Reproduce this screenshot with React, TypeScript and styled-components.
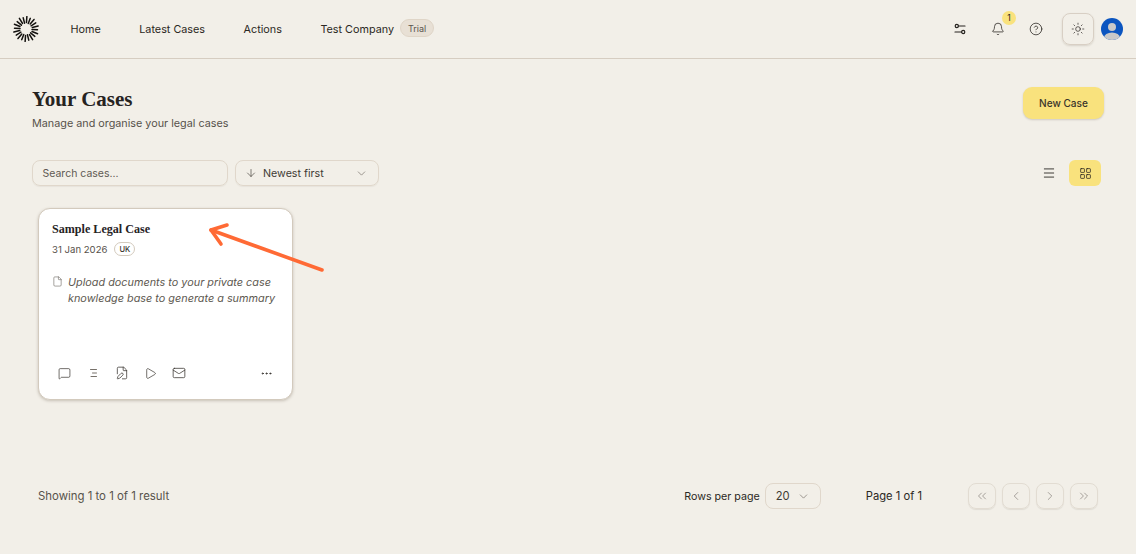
import React from "react";
import styled, { createGlobalStyle } from "styled-components";
import {
  ArrowDown, ChevronDown, ChevronLeft, ChevronRight, ChevronsLeft, ChevronsRight,
  Bell, CircleHelp, Sun, File, MessageSquare, Play, Mail, Ellipsis, Menu, LayoutGrid, FilePen,
} from "lucide-react";

const Global = createGlobalStyle`
  html, body { margin: 0; padding: 0; background: #f2efe8; }
  body { font-family: Inter, "Liberation Sans", sans-serif; color: #26231f; }
  * { box-sizing: border-box; }
`;

const Page = styled.div`
  position: relative;
  width: 1136px;
  height: 554px;
  overflow: hidden;
  background: #f2efe8;
`;

const Header = styled.header`
  height: 59px;
  display: flex;
  align-items: center;
  padding: 0 13px 0 13px;
  border-bottom: 1px solid #d6cdc1;
`;

const Logo = styled.svg`
  width: 26px;
  height: 26px;
  flex: none;
`;

const Nav = styled.nav`
  display: flex;
  align-items: center;
  gap: 38.5px;
  margin-left: 31.5px;
`;

const NavLink = styled.span`
  font-size: 10.8px;
  font-weight: 400;
  letter-spacing: 0;
  color: #2b2823;
  white-space: nowrap;
`;

const CompanyGroup = styled.div`
  display: flex;
  align-items: center;
  gap: 6px;
`;

const TrialBadge = styled.span`
  height: 18px;
  padding: 0 7px;
  margin-top: -2px;
  display: flex;
  align-items: center;
  border-radius: 9px;
  background: #e8e0d5;
  border: 1px solid #dfd5c7;
  font-size: 9px;
  color: #5a554e;
`;

const HeaderActions = styled.div`
  margin-left: auto;
  display: flex;
  align-items: center;
`;

const IconSlot = styled.span`
  position: relative;
  width: 38px;
  display: flex;
  justify-content: center;
  color: #26231f;
`;

const NotifyBadge = styled.span`
  position: absolute;
  top: -11px;
  left: 23px;
  width: 14px;
  height: 14px;
  border-radius: 50%;
  background: #f9e27d;
  font-size: 8.5px;
  display: flex;
  align-items: center;
  justify-content: center;
`;

const ThemeButton = styled.span`
  width: 32px;
  height: 32px;
  margin-left: 7px;
  border-radius: 8px;
  border: 1px solid #d8cfc4;
  box-shadow: 0 1px 2px rgba(70, 55, 35, 0.15);
  display: flex;
  align-items: center;
  justify-content: center;
  color: #26231f;
`;

const Avatar = styled.svg`
  width: 22px;
  height: 22px;
  margin-left: 7px;
  flex: none;
`;

const Main = styled.main`
  padding: 28px 32px 0;
`;

const TitleRow = styled.div`
  display: flex;
  justify-content: space-between;
  align-items: flex-start;
`;

const Title = styled.h1`
  margin: 0;
  font-family: "Liberation Serif", serif;
  font-size: 21px;
  line-height: 25px;
  font-weight: 700;
  color: #26231f;
`;

const Subtitle = styled.p`
  margin: 4px 0 0;
  font-size: 10.8px;
  line-height: 16px;
  color: #57524b;
`;

const NewCaseButton = styled.span`
  width: 81px;
  height: 32px;
  display: flex;
  align-items: center;
  justify-content: center;
  border-radius: 9px;
  background: #f9e27d;
  box-shadow: 0 1px 2px rgba(70, 55, 35, 0.2);
  font-size: 10.1px;
  font-weight: 500;
  color: #3a352b;
`;

const Toolbar = styled.div`
  margin-top: 28px;
  display: flex;
  align-items: center;
  gap: 7px;
`;

const SearchBox = styled.div`
  width: 196px;
  height: 26px;
  padding: 0 9.5px;
  display: flex;
  align-items: center;
  border: 1px solid #e0d7cb;
  border-radius: 8px;
  box-shadow: 0 1px 1px rgba(70, 55, 35, 0.06);
  font-size: 10.5px;
  color: #5f5a53;
`;

const SortBox = styled.div`
  width: 144px;
  height: 26px;
  padding: 0 10px 0 9px;
  display: flex;
  align-items: center;
  border: 1px solid #e0d7cb;
  border-radius: 8px;
  box-shadow: 0 1px 1px rgba(70, 55, 35, 0.06);
  font-size: 10.7px;
  color: #3f3b35;
  svg:first-child { margin-right: 6px; }
  svg:last-child { margin-left: auto; color: #77716a; }
`;

const ViewToggle = styled.div`
  margin-left: auto;
  margin-right: 3px;
  display: flex;
  align-items: center;
  gap: 4px;
`;

const ViewButton = styled.span<{ $active?: boolean }>`
  width: 32px;
  height: 26px;
  display: flex;
  align-items: center;
  justify-content: center;
  border-radius: 6px;
  background: ${(p) => (p.$active ? "#f9e27d" : "transparent")};
  color: #26231f;
`;

const Card = styled.article`
  width: 255px;
  height: 192px;
  margin: 22px 0 0 6px;
  padding: 13px 13px 0;
  display: flex;
  flex-direction: column;
  background: #fff;
  border: 1px solid #d3cabd;
  border-radius: 12px;
  box-shadow: 0 1px 3px rgba(70, 55, 35, 0.25);
`;

const CardTitle = styled.h2`
  margin: 0;
  font-family: "Liberation Serif", serif;
  font-size: 12.1px;
  line-height: 15px;
  font-weight: 700;
  color: #26231f;
`;

const MetaRow = styled.div`
  margin-top: 5px;
  display: flex;
  align-items: center;
  gap: 7px;
  font-size: 9.6px;
  color: #57524b;
`;

const RegionBadge = styled.span`
  height: 14px;
  padding: 0 4px;
  display: flex;
  align-items: center;
  border: 1px solid #d3cabd;
  border-radius: 7px;
  font-size: 7.6px;
  font-weight: 500;
  color: #37332e;
`;

const Summary = styled.div`
  margin-top: 18px;
  display: flex;
  gap: 5px;
  color: #5d5850;
  svg { flex: none; margin-top: 2px; color: #5d5850; }
`;

const SummaryText = styled.p`
  margin: 0;
  font-size: 10.85px;
  line-height: 16px;
  font-style: italic;
  white-space: nowrap;
`;

const CardActions = styled.div`
  margin-top: auto;
  margin-bottom: 19px;
  padding: 0 6px;
  display: flex;
  align-items: center;
  gap: 15px;
  color: #37332e;
`;

const MoreIcon = styled.span`
  margin-left: auto;
  margin-right: 0;
  display: flex;
`;

const Footer = styled.footer`
  position: relative;
  margin-top: 83px;
  padding: 0 6px;
  height: 26px;
  display: flex;
  align-items: center;
  justify-content: flex-end;
`;

const ResultCount = styled.span`
  margin-right: auto;
  font-size: 11.4px;
  color: #57524b;
`;

const FooterLabel = styled.span`
  font-size: 10.7px;
  color: #2b2823;
  white-space: nowrap;
`;

const RowsSelect = styled.div`
  width: 56px;
  height: 26px;
  margin-left: 5px;
  padding: 0 10px;
  display: flex;
  align-items: center;
  justify-content: space-between;
  border: 1px solid #e0d7cb;
  border-radius: 8px;
  font-size: 11.2px;
  color: #3f3b35;
  svg { color: #77716a; }
`;

const PageLabel = styled(FooterLabel)`
  margin-left: 45px;
  margin-right: 46px;
  font-size: 11.2px;
`;

const Pager = styled.div`
  display: flex;
  gap: 6px;
`;

const PagerButton = styled.span`
  width: 28px;
  height: 26px;
  display: flex;
  align-items: center;
  justify-content: center;
  border: 1px solid #e2dcd2;
  border-radius: 8px;
  box-shadow: 0 1px 1px rgba(70, 55, 35, 0.1);
  color: #85807a;
`;

const ArrowOverlay = styled.svg`
  position: absolute;
  left: 200px;
  top: 216px;
  width: 130px;
  height: 62px;
  pointer-events: none;
`;

const rays = Array.from({ length: 20 }, (_, i) => (i * 360) / 20 + 4);

function LogoMark() {
  return (
    <Logo viewBox="0 0 26 26">
      {rays.map((a, i) => (
        <line
          key={a}
          x1="13"
          y1={i % 2 ? 7 : 6.5}
          x2="13"
          y2={i % 2 ? 1.5 : 0.5}
          stroke="#14120f"
          strokeWidth="1.5"
          strokeLinecap="round"
          transform={`rotate(${a} 13 13)`}
        />
      ))}
    </Logo>
  );
}

function SlidersGlyph() {
  return (
    <svg width="14" height="14" viewBox="0 0 14 14" fill="none" stroke="currentColor" strokeWidth="1.2" strokeLinecap="round">
      <circle cx="3.8" cy="4" r="1.6" />
      <line x1="5.4" y1="4" x2="12" y2="4" />
      <circle cx="10.2" cy="10" r="1.6" />
      <line x1="2" y1="10" x2="8.6" y2="10" />
    </svg>
  );
}

function LinesGlyph() {
  return (
    <svg width="14" height="14" viewBox="0 0 14 14" fill="none" stroke="#77716a" strokeWidth="1" strokeLinecap="round">
      <line x1="4.5" y1="3.5" x2="10.5" y2="3.5" />
      <line x1="6.5" y1="7" x2="10.5" y2="7" />
      <line x1="5" y1="10.5" x2="10.5" y2="10.5" />
    </svg>
  );
}

export default function App() {
  return (
    <Page>
      <Global />
      <Header>
        <LogoMark />
        <Nav>
          <NavLink>Home</NavLink>
          <NavLink>Latest Cases</NavLink>
          <NavLink>Actions</NavLink>
          <CompanyGroup>
            <NavLink>Test Company</NavLink>
            <TrialBadge>Trial</TrialBadge>
          </CompanyGroup>
        </Nav>
        <HeaderActions>
          <IconSlot><SlidersGlyph /></IconSlot>
          <IconSlot>
            <Bell size={14} strokeWidth={1.3} />
            <NotifyBadge>1</NotifyBadge>
          </IconSlot>
          <IconSlot><CircleHelp size={14} strokeWidth={1.3} /></IconSlot>
          <ThemeButton><Sun size={14} strokeWidth={1.2} /></ThemeButton>
          <Avatar viewBox="0 0 22 22">
            <defs>
              <clipPath id="avatar-clip"><circle cx="11" cy="11" r="11" /></clipPath>
            </defs>
            <g clipPath="url(#avatar-clip)">
              <rect width="22" height="22" fill="#0b55c0" />
              <circle cx="11" cy="9" r="4" fill="#c9c9c9" />
              <ellipse cx="11" cy="20" rx="8" ry="5.5" fill="#c9c9c9" />
            </g>
          </Avatar>
        </HeaderActions>
      </Header>
      <Main>
        <TitleRow>
          <div>
            <Title>Your Cases</Title>
            <Subtitle>Manage and organise your legal cases</Subtitle>
          </div>
          <NewCaseButton>New Case</NewCaseButton>
        </TitleRow>
        <Toolbar>
          <SearchBox>Search cases...</SearchBox>
          <SortBox>
            <ArrowDown size={12} strokeWidth={1.3} />
            Newest first
            <ChevronDown size={13} strokeWidth={1.3} />
          </SortBox>
          <ViewToggle>
            <ViewButton><Menu size={14} strokeWidth={1.5} /></ViewButton>
            <ViewButton $active><LayoutGrid size={13} strokeWidth={1.4} /></ViewButton>
          </ViewToggle>
        </Toolbar>
        <Card>
          <CardTitle>Sample Legal Case</CardTitle>
          <MetaRow>
            31 Jan 2026
            <RegionBadge>UK</RegionBadge>
          </MetaRow>
          <Summary>
            <File size={11} strokeWidth={1.2} />
            <SummaryText>
              Upload documents to your private case<br />
              knowledge base to generate a summary
            </SummaryText>
          </Summary>
          <CardActions>
            <MessageSquare size={13} strokeWidth={1.3} />
            <LinesGlyph />
            <FilePen size={14} strokeWidth={1.3} />
            <Play size={13} strokeWidth={1.3} />
            <Mail size={14} strokeWidth={1.3} />
            <MoreIcon><Ellipsis size={13} strokeWidth={1.8} /></MoreIcon>
          </CardActions>
        </Card>
        <Footer>
          <ResultCount>Showing 1 to 1 of 1 result</ResultCount>
          <FooterLabel>Rows per page</FooterLabel>
          <RowsSelect>20<ChevronDown size={13} strokeWidth={1.3} /></RowsSelect>
          <PageLabel>Page 1 of 1</PageLabel>
          <Pager>
            <PagerButton><ChevronsLeft size={14} strokeWidth={1.2} /></PagerButton>
            <PagerButton><ChevronLeft size={14} strokeWidth={1.2} /></PagerButton>
            <PagerButton><ChevronRight size={14} strokeWidth={1.2} /></PagerButton>
            <PagerButton><ChevronsRight size={14} strokeWidth={1.2} /></PagerButton>
          </Pager>
        </Footer>
      </Main>
      <ArrowOverlay viewBox="0 0 130 62" fill="none" stroke="#ff6a35" strokeWidth="3.6" strokeLinecap="round" strokeLinejoin="round">
        <line x1="122" y1="54" x2="11" y2="14" />
        <polyline points="27,9 11,14 21,28" />
      </ArrowOverlay>
    </Page>
  );
}
